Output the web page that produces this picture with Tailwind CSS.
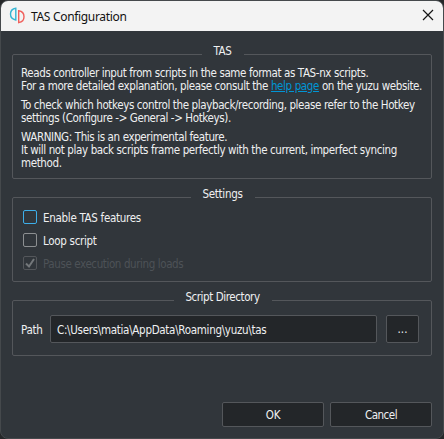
<!DOCTYPE html>
<html lang="en">
<head>
<meta charset="utf-8">
<title>TAS Configuration</title>
<script src="https://cdn.jsdelivr.net/npm/@tailwindcss/browser@4"></script>
</head>
<body class="w-[444px] h-[439px] overflow-hidden bg-[#252729]">
<main class="w-[444px] h-[439px] flex flex-col overflow-hidden rounded-[8px] border border-[#45494c] bg-[#31363b] text-[#eff0f1] font-['DejaVu_Sans_Condensed','DejaVu_Sans',sans-serif] [font-stretch:condensed] text-[11.5px] tracking-[-0.3px] leading-[13px] whitespace-nowrap">
  <header class="h-[30px] shrink-0 flex items-center bg-[#f3f3f3] text-[#111] pl-[8px] pr-[9px] font-['Noto_Sans',sans-serif] text-[12px]">
    <svg class="w-[16px] h-[18px]" viewBox="0 0 16 18" fill="none" stroke-width="1.4"><path d="M6.800 1.200v11.800C3.700 12.500 1.500 10.300 1.500 7.100s2.200-5.400 5.300-5.900Z" stroke="#35b5d3"/><path d="M9.700 3.800v11.800c3.200-.5 5.300-2.700 5.300-5.900S12.900 4.300 9.700 3.800Z" stroke="#f0605c"/></svg>
    <h1 class="ml-[6px] grow tracking-[-0.32px]">TAS Configuration</h1>
    <svg class="w-[12px] h-[12px] mb-[2px]" viewBox="0 0 12 12" fill="none" stroke="#151515" stroke-width="1.2"><path d="m1 1 10 10M11 1 1 11"/></svg>
  </header>
  <div class="grow flex flex-col px-[11px] pb-[11px]">
    <fieldset class="min-w-0 mt-[14px] h-[134px] shrink-0 border border-[#54575b] rounded-[2px] pl-[2px]">
      <legend class="mx-auto pl-[11px] pr-[12px] h-[19px] leading-[13px]">TAS</legend>
      <div class="pt-[3px] pl-[6px] tracking-[-0.385px]">
      <p>Reads controller input from scripts in the same format as TAS-nx scripts.</p>
      <p>For a more detailed explanation, please consult the <a class="text-[#0095d5] underline">help page</a> on the yuzu website.</p>
      <p class="mt-[6px]">To check which hotkeys control the playback/recording, please refer to the Hotkey</p>
      <p>settings (Configure -&gt; General -&gt; Hotkeys).</p>
      <p class="mt-[6px]">WARNING: This is an experimental feature.</p>
      <p>It will not play back scripts frame perfectly with the current, imperfect syncing</p>
      <p>method.</p>
      </div>
    </fieldset>
    <fieldset class="min-w-0 mt-[9px] h-[94px] shrink-0 border border-[#54575b] rounded-[2px] pl-[2px]">
      <legend class="mx-auto pl-[11px] pr-[12px] h-[19px] leading-[13px]">Settings</legend>
      <div class="flex flex-col gap-[9px] pt-[3px] pl-[8px]">
      <div class="flex items-center h-[14px] leading-[15px]"><i class="size-[14px] border border-[#3daee9] rounded-[2px] mr-[6px]"></i><span class="pt-[2px]">Enable TAS features</span></div>
      <div class="flex items-center h-[14px] leading-[15px]"><i class="size-[14px] border border-[#8c8f91] rounded-[2px] mr-[6px]"></i><span class="pt-[2px]">Loop script</span></div>
      <div class="flex items-center h-[14px] leading-[15px] text-[#4d5257] tracking-[-0.4px]"><i class="size-[14px] border border-[#54575b] rounded-[2px] mr-[6px]"><svg class="size-[12px]" viewBox="0 0 12 12" fill="none" stroke="#73777a" stroke-width="2"><path d="m2 6.500 3 3 5-7.500"/></svg></i><span class="pt-[2px]">Pause execution during loads</span></div>
      </div>
    </fieldset>
    <fieldset class="min-w-0 mt-[9px] h-[65px] shrink-0 border border-[#54575b] rounded-[2px] pl-[2px]">
      <legend class="mx-auto pl-[11px] pr-[12px] h-[19px] leading-[13px] tracking-[-0.42px]">Script Directory</legend>
      <div class="flex items-center h-[28px] mt-[5px] pl-[6px]"><span class="w-[29px] pt-[2px]">Path</span><span class="w-[327px] h-[28px] border border-[#54575b] rounded-[2px] bg-[#232629] leading-[28px] pl-[6px]">C:\Users\matia\AppData\Roaming\yuzu\tas</span><button class="ml-[9px] w-[33px] h-[28px] border border-[#54575b] rounded-[2px] bg-[#232629] tracking-[0.1px]">...</button></div>
    </fieldset>
    <footer class="mt-auto flex justify-end gap-[6px]"><button class="w-[102px] h-[25px] border border-[#54575b] rounded-[2px] bg-[#232629] pt-[2px]">OK</button><button class="w-[102px] h-[25px] border border-[#54575b] rounded-[2px] bg-[#232629] pt-[2px] tracking-[-0.5px]">Cancel</button></footer>
  </div>
</main>
</body>
</html>
